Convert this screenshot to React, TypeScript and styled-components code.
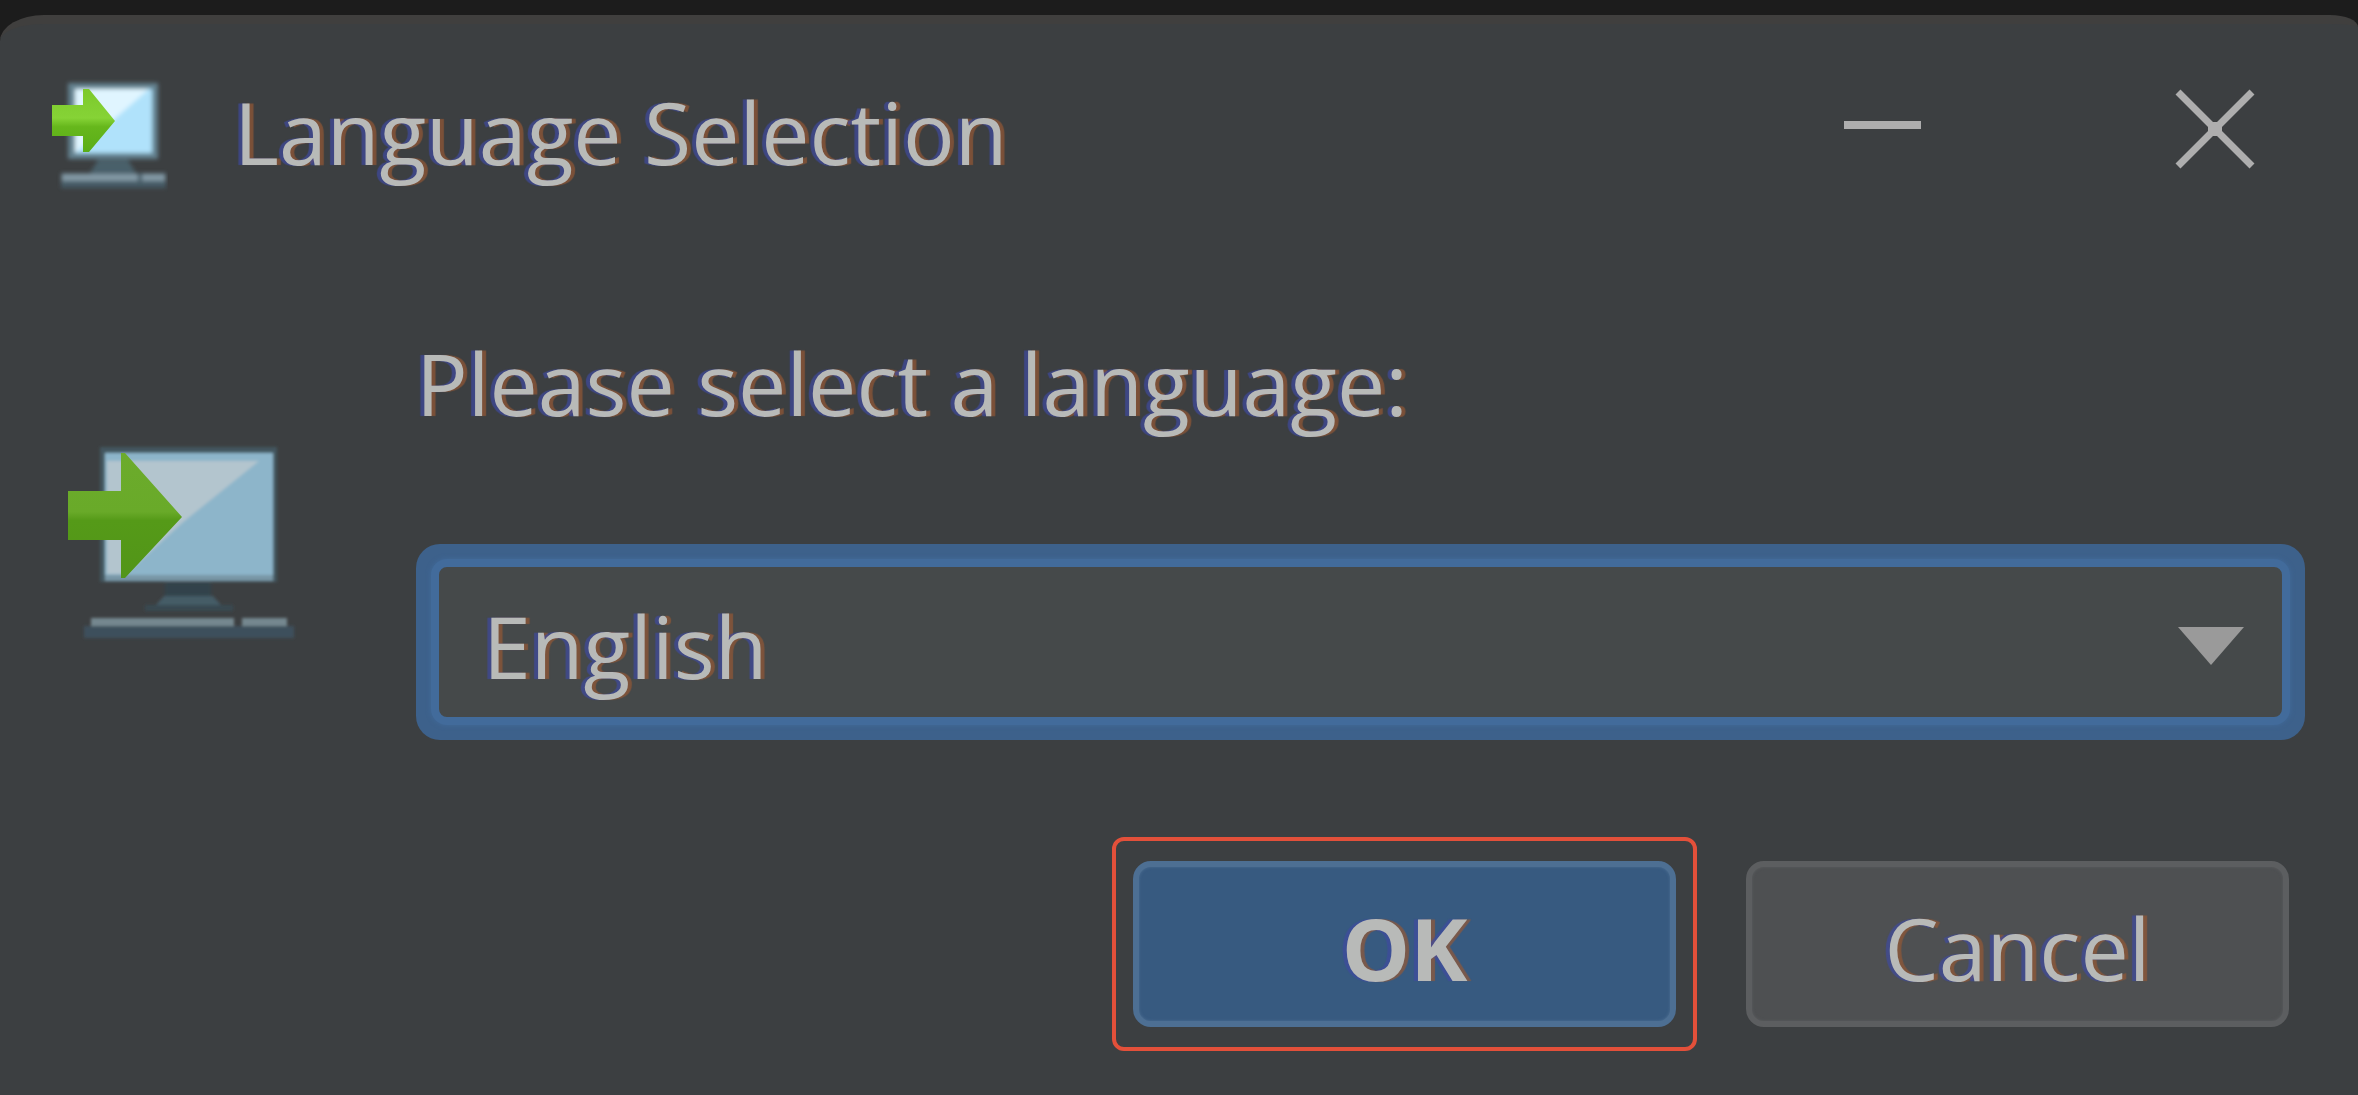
import React, { useState } from "react";
import styled, { createGlobalStyle, css } from "styled-components";

const GlobalStyle = createGlobalStyle`
  *, *::before, *::after {
    box-sizing: border-box;
  }
  body {
    margin: 0;
    background: #1c1c1c;
  }
`;

const uiText = css`
  font-family: "Open Sans", "Noto Sans", sans-serif;
  font-size: 86px;
  font-weight: 400;
  line-height: 120px;
  color: #b8bab8;
  text-shadow: -4px 0 1px rgba(62, 74, 160, 0.7), 4px 0 1px rgba(150, 88, 52, 0.7);
`;

const Desktop = styled.div`
  min-height: 100vh;
  padding-top: 15px;
  display: flex;
  background: #1c1c1c;
`;

const DialogWindow = styled.main`
  flex: 1;
  min-width: 0;
  background: #3c3f41;
  border-top: 9px solid #403f3e;
  border-radius: 44px 28px 0 0 / 26px 12px 0 0;
`;

const TitleBar = styled.header`
  display: flex;
  align-items: center;
  padding: 48px 63px 0 52px;
`;

const TitleIcon = styled.svg`
  flex: none;
  width: 116px;
  height: 120px;
`;

const Title = styled.h1`
  ${uiText}
  flex: 1;
  margin: 0 0 0 66px;
  white-space: nowrap;
`;

const WindowControls = styled.div`
  display: flex;
  gap: 173px;
`;

const ControlButton = styled.button`
  width: 160px;
  height: 120px;
  padding: 0;
  border: 0;
  background: transparent;

  svg {
    display: block;
    width: 100%;
    height: 100%;
  }
`;

const Body = styled.form`
  padding: 131px 53px 40px 60px;
`;

const Prompt = styled.div`
  display: flex;
  align-items: center;
  gap: 116px;
`;

const PromptIcon = styled.svg`
  flex: none;
  width: 240px;
  height: 228px;
`;

const Field = styled.div`
  flex: 1;
  min-width: 0;
  display: flex;
  flex-direction: column;
  gap: 101px;
`;

const FieldLabel = styled.label`
  ${uiText}
`;

const ComboBox = styled.div`
  display: grid;
  align-items: center;
  height: 196px;
  padding: 15px;
  border-radius: 24px;
  background: #3d618b;

  > * {
    grid-area: 1 / 1;
  }
`;

const ComboSelect = styled.select`
  ${uiText}
  appearance: none;
  width: 100%;
  height: 100%;
  padding: 8px 140px 0 44px;
  border: 8px solid #426b9b;
  border-radius: 16px;
  outline: none;
  background: #45494a;
  box-shadow: 0 0 5px #426b9b;
`;

const ComboArrow = styled.svg`
  justify-self: end;
  width: 66px;
  height: 38px;
  margin-right: 46px;
  margin-top: 8px;
  pointer-events: none;
`;

const Actions = styled.div`
  display: flex;
  justify-content: flex-end;
  align-items: center;
  gap: 49px;
  padding: 97px 16px 0 0;
`;

const Highlight = styled.div`
  padding: 20px 17px;
  border: 4px solid #e3503a;
  border-radius: 12px;
`;

const ActionButton = styled.button<{ $primary?: boolean }>`
  ${uiText}
  width: 543px;
  height: 166px;
  padding: 8px 0 0;
  border: 6px solid ${(p) => (p.$primary ? "#4d6f93" : "#5c5e60")};
  border-radius: 18px;
  background: ${(p) => (p.$primary ? "#375a80" : "#4e5052")};
  box-shadow: inset 0 0 3px ${(p) => (p.$primary ? "#4d6f93" : "#5c5e60")};
  font-weight: ${(p) => (p.$primary ? 700 : 400)};
`;

function SmallComputerIcon() {
  return (
    <TitleIcon viewBox="52 72 116 120" aria-hidden="true">
      <defs>
        <linearGradient id="smallArrow" x1="0" y1="0" x2="0" y2="1">
          <stop offset="0" stopColor="#7cc92c" />
          <stop offset="0.46" stopColor="#86d336" />
          <stop offset="0.6" stopColor="#66b71c" />
          <stop offset="1" stopColor="#5aad18" />
        </linearGradient>
        <filter id="smallSoft">
          <feGaussianBlur stdDeviation="2" />
        </filter>
      </defs>
      <g filter="url(#smallSoft)">
        <rect x="68" y="83" width="90" height="76" fill="#64818f" />
        <rect x="75" y="89" width="77" height="64" fill="#b0e2fb" />
        <path d="M75 89h74L75 153z" fill="#e0f5ff" />
        <path d="M98 160h30l8 13H90z" fill="#4a606b" />
        <rect x="61" y="173" width="105" height="15" fill="#445a65" />
        <path d="M62 174h76v7H62zM142 174h23v7h-23z" fill="#8298a4" />
      </g>
      <path d="M52 105h31V89h6l26 32-26 31h-6v-16H52z" fill="url(#smallArrow)" />
    </TitleIcon>
  );
}

function LargeComputerIcon() {
  return (
    <PromptIcon viewBox="60 418 240 228" aria-hidden="true">
      <defs>
        <linearGradient id="largeArrow" x1="0" y1="0" x2="0" y2="1">
          <stop offset="0" stopColor="#6cab2c" />
          <stop offset="0.47" stopColor="#69aa29" />
          <stop offset="0.54" stopColor="#559a18" />
          <stop offset="1" stopColor="#529518" />
        </linearGradient>
        <filter id="largeSoft">
          <feGaussianBlur stdDeviation="1.8" />
        </filter>
      </defs>
      <g filter="url(#largeSoft)">
        <rect x="100" y="447" width="177" height="135" fill="#43565f" />
        <rect x="105" y="453" width="168" height="127" fill="#8db5ca" />
        <rect x="105" y="575" width="168" height="6" fill="#7896a6" />
        <path d="M107 461h152L182 523 126 574h-19z" fill="#b3c5ce" />
        <rect x="165" y="583" width="46" height="13" fill="#33434c" />
        <path d="M164 596h49l8 9h-65z" fill="#455b66" />
        <rect x="145" y="605" width="88" height="6" fill="#394951" />
        <rect x="84" y="626" width="210" height="12" fill="#3c505b" />
        <path d="M91 618h143v8H91zM242 618h45v8h-45z" fill="#75878f" />
      </g>
      <path d="M68 491h53v-38h4l57 64-57 61h-4v-38H68z" fill="url(#largeArrow)" />
    </PromptIcon>
  );
}

export default function App() {
  const [language, setLanguage] = useState("English");

  return (
    <Desktop>
      <GlobalStyle />
      <DialogWindow>
        <TitleBar>
          <SmallComputerIcon />
          <Title>Language Selection</Title>
          <WindowControls>
            <ControlButton type="button" aria-label="Minimize">
              <svg viewBox="0 0 160 120" aria-hidden="true">
                <path d="M42 53h77" stroke="#aeaeae" strokeWidth="8" />
              </svg>
            </ControlButton>
            <ControlButton type="button" aria-label="Close">
              <svg viewBox="0 0 160 120" aria-hidden="true">
                <path d="M43 20l74 74M117 20l-74 74" stroke="#aeaeae" strokeWidth="7" />
                <rect x="73" y="50" width="14" height="14" fill="#aeaeae" />
              </svg>
            </ControlButton>
          </WindowControls>
        </TitleBar>
        <Body onSubmit={(e) => e.preventDefault()}>
          <Prompt>
            <LargeComputerIcon />
            <Field>
              <FieldLabel htmlFor="language">Please select a language:</FieldLabel>
              <ComboBox>
                <ComboSelect
                  id="language"
                  value={language}
                  onChange={(e) => setLanguage(e.target.value)}
                >
                  <option>English</option>
                </ComboSelect>
                <ComboArrow viewBox="0 0 72 40" preserveAspectRatio="none" aria-hidden="true">
                  <path d="M0 0h72L36 40z" fill="#9a9a9a" />
                </ComboArrow>
              </ComboBox>
            </Field>
          </Prompt>
          <Actions>
            <Highlight>
              <ActionButton type="submit" $primary>
                OK
              </ActionButton>
            </Highlight>
            <ActionButton type="button">Cancel</ActionButton>
          </Actions>
        </Body>
      </DialogWindow>
    </Desktop>
  );
}
